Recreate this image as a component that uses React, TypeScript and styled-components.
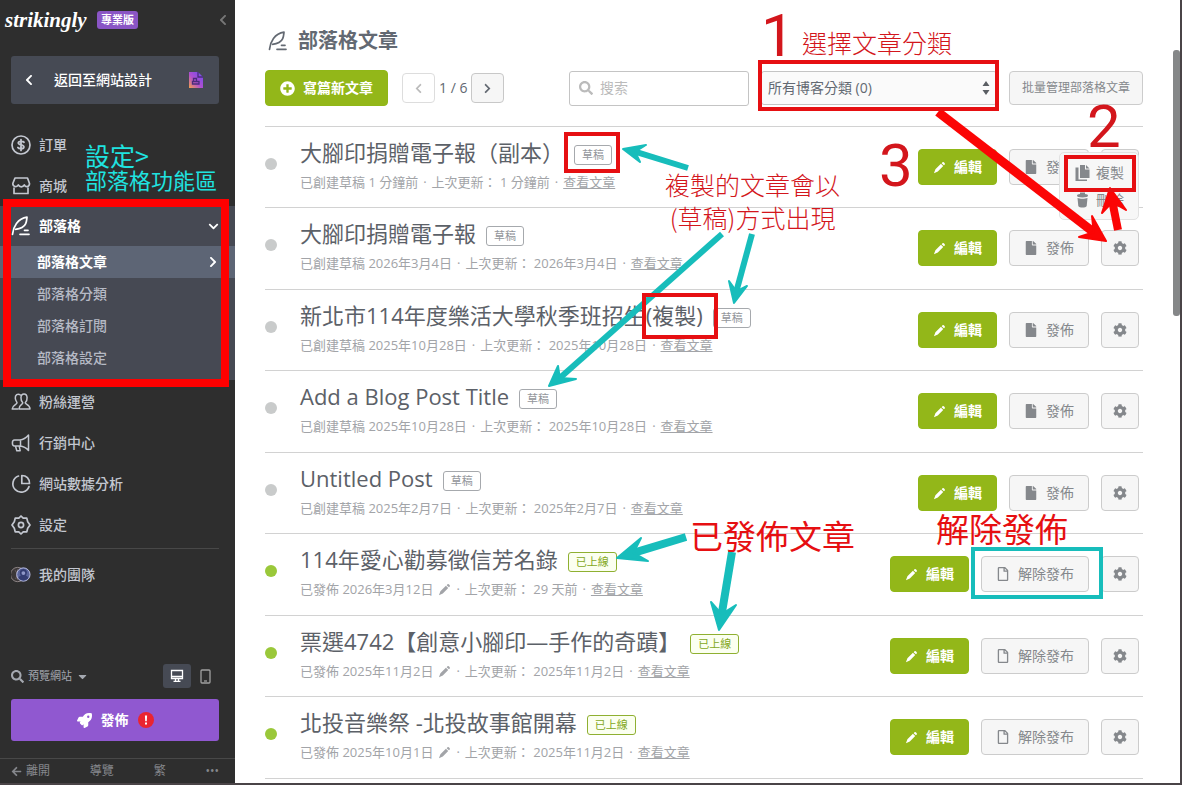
import React from "react";
import styled, { createGlobalStyle } from "styled-components";
import {
  FaArrowLeft,
  FaCaretDown,
  FaChevronDown,
  FaChevronLeft,
  FaChevronRight,
  FaCog,
  FaFile,
  FaPlusCircle,
  FaRegFile,
  FaRocket,
  FaSearch,
} from "react-icons/fa";

const RED = "#e60f12";
const TEAL = "#17bdbb";

const GlobalStyle = createGlobalStyle`
  *, *::before, *::after { box-sizing: border-box; }
  body {
    margin: 0;
    background: #4a4447;
    color: #636972;
    font: 14px/20px "Open Sans", "Noto Sans CJK TC", sans-serif;
  }
  button, input, select { font: inherit; color: inherit; }
  button { cursor: pointer; }
  a { color: inherit; }
  svg { display: block; flex: none; }
`;

const Page = styled.div`
  position: relative;
  display: flex;
  min-height: 100vh;
  padding: 0 2px 2px 0;
  overflow: hidden;
`;

/* ---------- sidebar ---------- */

const Sidebar = styled.aside`
  display: flex;
  flex-direction: column;
  flex: 0 0 235px;
  background: #2e2e2e;
  color: #c3c7d0;
`;

const Brand = styled.header`
  display: flex;
  align-items: center;
  height: 40px;
  padding: 0 6px 0 5px;
  color: #fff;
`;

const Logo = styled.span`
  width: 84px;
  margin-right: 8px;
  font: italic bold 21px/28px "Liberation Serif", serif;
`;

const Plan = styled.span`
  padding: 0 4px;
  border-radius: 3px;
  background: #8a55c5;
  font-size: 11px;
  line-height: 18px;
  font-weight: 700;
`;

const Collapse = styled.button`
  margin-left: auto;
  padding: 0;
  border: 0;
  background: none;
  color: #777;
`;

const BackButton = styled.button`
  display: flex;
  align-items: center;
  height: 48px;
  margin: 16px 16px 20px 11px;
  padding: 0 15px 0 12px;
  border: 0;
  border-radius: 3px;
  background: #464a54;
  color: #fff;
  font-weight: 500;

  span {
    flex: 1;
    padding-left: 19px;
    text-align: left;
  }
`;

const NavItem = styled.a<{ $active?: boolean }>`
  display: flex;
  align-items: center;
  gap: 8px;
  height: ${(p) => (p.$active ? 40 : 41)}px;
  padding: 0 16px 0 11px;
  color: ${(p) => (p.$active ? "#fff" : "#c3c7d0")};
  font-weight: ${(p) => (p.$active ? 700 : 500)};
  text-decoration: none;

  span {
    flex: 1;
  }
`;

const NavGroup = styled.div`
  margin-bottom: 1px;
  padding-bottom: 6px;
  background: #464953;
`;

const SubItem = styled.a<{ $active?: boolean }>`
  display: flex;
  align-items: center;
  justify-content: space-between;
  height: 32px;
  padding: 0 16px 0 37px;
  background: ${(p) => (p.$active ? "#5d6575" : "transparent")};
  color: ${(p) => (p.$active ? "#fff" : "#b6bac5")};
  font-weight: ${(p) => (p.$active ? 700 : 500)};
  text-decoration: none;
`;

const NavRule = styled.hr`
  width: auto;
  margin: 3px 16px 5px 11px;
  border: 0;
  border-top: 1px solid #484848;
`;

const Tools = styled.div`
  display: flex;
  align-items: center;
  margin: auto 0 11px;
  padding: 0 16px 0 11px;
  color: #a4a8b0;
  font-size: 11px;
`;

const ToolButton = styled.button<{ $active?: boolean }>`
  display: flex;
  align-items: center;
  justify-content: center;
  width: 28px;
  height: 24px;
  padding: 0;
  border: 0;
  border-radius: 3px;
  background: ${(p) => (p.$active ? "#464a54" : "none")};
  color: ${(p) => (p.$active ? "#fff" : "#a0a0a0")};
`;

const PreviewButton = styled.button`
  display: flex;
  align-items: center;
  gap: 4px;
  margin-right: auto;
  padding: 0;
  border: 0;
  background: none;
`;

const SiteButton = styled.button`
  display: flex;
  align-items: center;
  justify-content: center;
  gap: 9px;
  height: 42px;
  margin: 0 16px 17px 11px;
  border: 0;
  border-radius: 3px;
  background: #9058d0;
  color: #fff;
  font-weight: 700;
`;

const SidebarFooter = styled.footer`
  display: flex;
  align-items: center;
  justify-content: space-between;
  height: 25px;
  padding: 0 16px 0 11px;
  border-top: 1px solid #484848;
  color: #85878c;
  font-size: 12px;

  a {
    display: flex;
    align-items: center;
    gap: 4px;
    text-decoration: none;
  }
`;

/* ---------- main column ---------- */

const Main = styled.main`
  flex: 1;
  min-width: 0;
  padding: 25px 30px 4px;
  background: #fff;
`;

const ScrollTrack = styled.div`
  flex: 0 0 7px;
  padding-top: 50px;
  background: #fff;
`;

const ScrollThumb = styled.div`
  height: 266px;
  border-radius: 3px;
  background: #858788;
`;

const Heading = styled.h1`
  display: flex;
  align-items: center;
  gap: 10px;
  margin: 0 0 13px;
  padding-left: 3px;
  font-size: 20px;
  line-height: 32px;
  font-weight: 700;
`;

const Toolbar = styled.div`
  display: flex;
  align-items: center;
  height: 36px;
  margin-bottom: 20px;
`;

const Button = styled.button<{ $green?: boolean; $small?: boolean }>`
  display: flex;
  align-items: center;
  justify-content: center;
  gap: 8px;
  height: ${(p) => (p.$small ? 34 : 36)}px;
  padding: 0 ${(p) => (p.$small ? 12 : 14)}px;
  border: 1px solid ${(p) => (p.$green ? "#90b718" : "#ccc")};
  border-radius: 4px;
  background: ${(p) => (p.$green ? "#93b719" : "#f6f6f6")};
  color: ${(p) => (p.$green ? "#fff" : "#85888c")};
  font-size: ${(p) => (p.$small ? 12 : 14)}px;
  font-weight: ${(p) => (p.$green ? 700 : 400)};
  white-space: nowrap;
`;

const GearButton = styled(Button)`
  width: 38px;
  padding: 0;
`;

const Pager = styled.div`
  display: flex;
  align-items: center;
  gap: 4px;
  margin: 0 auto 0 14px;
  white-space: nowrap;
`;

const PageButton = styled.button`
  display: flex;
  align-items: center;
  justify-content: center;
  width: 33px;
  height: 30px;
  padding: 0;
  border: 1px solid #c8c8c8;
  border-radius: 4px;
  background: #f6f6f6;

  &:disabled {
    border-color: #ddd;
    background: #fff;
    color: #bbb;
  }
`;

const SearchBox = styled.label`
  display: flex;
  align-items: center;
  gap: 7px;
  width: 180px;
  height: 35px;
  margin-right: 12px;
  padding: 0 9px;
  border: 1px solid #c4c4c4;
  border-radius: 3px;
  color: #bbb;

  input {
    width: 100%;
    min-width: 0;
    padding: 0;
    border: 0;
    outline: 0;
    background: none;
  }
  input::placeholder {
    color: #bbb;
  }
`;

const SelectBox = styled.label`
  display: flex;
  align-items: center;
  width: 236px;
  height: 34px;
  margin-right: 12px;
  padding: 0 6px;
  border: 1px solid #c4c4c4;
  border-radius: 3px;
  background: #fafafa;

  select {
    flex: 1;
    padding: 0;
    border: 0;
    outline: 0;
    appearance: none;
    background: none;
  }
`;

const PostList = styled.ul`
  display: grid;
  grid-auto-rows: 81px 82px;
  margin: 0;
  padding: 0;
  border-bottom: 1px solid #d2d2d2;
  list-style: none;
`;

const PostRow = styled.li`
  position: relative;
  display: flex;
  align-items: start;
  padding: 22px 4px 0 0;
  border-top: 1px solid #d2d2d2;
`;

const Dot = styled.span<{ $live: boolean }>`
  flex: none;
  width: 12px;
  height: 12px;
  margin: 9px 23px 0 0;
  border-radius: 50%;
  background: ${(p) => (p.$live ? "#9ac83a" : "#c9cbcb")};
`;

const PostText = styled.div`
  flex: 1;
  min-width: 0;
  margin-top: -10px;
  white-space: nowrap;
`;

const TitleLine = styled.div`
  display: flex;
  align-items: center;
  gap: 10px;
  height: 26px;
`;

const PostTitle = styled.h2`
  margin: 0;
  color: #5c6168;
  font-size: 22px;
  line-height: 26px;
  font-weight: 400;
`;

const Badge = styled.span<{ $live: boolean }>`
  height: 20px;
  margin-top: 5px;
  padding: 0 7px;
  border: 1px solid ${(p) => (p.$live ? "#8fb031" : "#a6a9ad")};
  border-radius: 3px;
  background: ${(p) => (p.$live ? "#fbfff0" : "#fff")};
  color: ${(p) => (p.$live ? "#84a81c" : "#92959a")};
  font-size: 11px;
  line-height: 17px;
`;

const Meta = styled.p`
  display: flex;
  align-items: center;
  gap: 5px;
  margin: 7px 0 0;
  color: #a2a4a8;
  font-size: 13px;
  line-height: 20px;
`;

const Actions = styled.div`
  display: flex;
  gap: 12px;
`;

const Menu = styled.div`
  position: absolute;
  top: 25px;
  right: 4px;
  z-index: 1;
  display: flex;
  flex-direction: column;
  width: 80px;
  height: 68px;
  padding: 6px 0;
  border: 1px solid #e2e2e2;
  border-radius: 5px;
  background: #f7f7f7;

  button {
    display: flex;
    align-items: center;
    gap: 6px;
    height: 28px;
    padding: 0 0 0 15px;
    border: 0;
    background: none;
    color: #85888c;
    font-size: 14px;
  }
`;

/* ---------- hand-placed notes over the page ---------- */

const Overlay = styled.div`
  position: absolute;
  top: 0;
  left: 0;
  z-index: 2;
  width: 1182px;
  height: 785px;
  pointer-events: none;
`;

const Note = styled.div<{ $x: number; $y: number; $size: number; $line?: number; $color?: string; $weight?: number }>`
  position: absolute;
  left: ${(p) => p.$x}px;
  top: ${(p) => p.$y}px;
  color: ${(p) => p.$color || "#d3161c"};
  font-family: "Noto Sans CJK TC", sans-serif;
  font-size: ${(p) => p.$size}px;
  font-weight: ${(p) => p.$weight || 300};
  line-height: ${(p) => p.$line || p.$size}px;
  text-align: center;
  white-space: nowrap;
`;

const Digit = styled(Note)`
  font-family: Roboto, sans-serif;
`;

const Frame = styled.div<{ $x: number; $y: number; $w: number; $h: number; $b?: number; $color?: string }>`
  position: absolute;
  left: ${(p) => p.$x}px;
  top: ${(p) => p.$y}px;
  width: ${(p) => p.$w}px;
  height: ${(p) => p.$h}px;
  border: ${(p) => p.$b || 4}px solid ${(p) => p.$color || RED};
`;

/* ---------- icons ---------- */

type IconProps = { size?: number };

const Line = ({ size = 20, children }: IconProps & { children: React.ReactNode }) => (
  <svg width={size} height={size} viewBox="0 0 20 20" fill="none" stroke="currentColor" strokeWidth="1.7" strokeLinejoin="round" strokeLinecap="round" aria-hidden="true">
    {children}
  </svg>
);

const DollarIcon = () => (
  <Line>
    <circle cx="10" cy="10" r="9" />
    <path d="M13 7.2C12.4 6.1 7.3 5.7 7.3 8.1c0 2.3 5.6 1.4 5.6 3.8 0 2.3-5.2 2.1-6 .6M10 4.6v10.8" strokeWidth="1.8" />
  </Line>
);
const ShopIcon = () => (
  <Line>
    <path d="M4 2h12.500l2 5.500c0 3.600-4 4-5.200 1.400-1.300 2.600-4.700 2.600-6 0C6 11.500 1.800 11 1.800 7.500zM3 12v5.500h14V12" />
  </Line>
);
const QuillIcon = ({ size = 20 }: IconProps) => (
  <Line size={size}>
    <path d="M1.500 18.300C2.200 11 6.500 2.500 16 1.200c-.3 2.300-.3 4.300-1.300 6.500C13.200 11 9.500 13 4.500 13.300" />
    <path d="M9 18.300h9M13.500 14.300H17" />
  </Line>
);
const PeopleIcon = () => (
  <Line>
    <path d="M9.500 3C6.600 1 4 3 4.300 6.300c.1 2 1 3.200 1.700 4.200.5 2-4.500 2.400-4.800 6.500h5.500M8 17c.2-4.400 4-4.500 3.800-6.300C9.300 8.500 9 2 13 2s3.800 6.500 1.200 8.700C14 12.500 19 12.500 19 17z" strokeWidth="1.500" />
  </Line>
);
const HornIcon = () => (
  <Line>
    <path d="M17.500 2v15.500C14.500 14 12.500 13.300 9 13H3.500C.7 13 .7 7 3.500 7H9c3.500-.3 5.500-1.500 8.500-5zM9.500 7v6M4.500 13.200l1.300 4.600h3.400l-1-4.600" strokeWidth="1.500" />
  </Line>
);
const PieIcon = () => (
  <Line>
    <path d="M7.500 2A8.300 8.300 0 1 0 18 12.600" />
    <path d="M10.800 1.500v8h7.700c0-4.800-3-8-7.700-8z" />
  </Line>
);
const GearLineIcon = () => (
  <Line>
    <path d="M7.800 3.200 10 1l2.200 2.200h3.600l.9 3.500L19 10l-2.300 3.300-.9 3.500h-3.600L10 19l-2.200-2.200H4.200l-.9-3.500L1 10l2.300-3.300.9-3.500z" />
    <circle cx="10" cy="10" r="2.600" />
  </Line>
);
const TeamIcon = () => (
  <svg width="20" height="18" viewBox="1 0 21 18" aria-hidden="true">
    <circle cx="8" cy="8.500" r="7.500" fill="#3b3738" stroke="#92898a" />
    <path d="M5 4c2 1 3 5 1 9M8 3v11" stroke="#77696a" fill="none" />
    <circle cx="14" cy="8.500" r="7" fill="#5a659c" stroke="#b8bce0" />
    <path d="M10.500 5c1-3 6-3 7 0 .5 2 0 3.500-1 4.500 2 .5 2.500 2 2.500 3-2.500 3-7.500 3-10 0 0-1 .5-2.500 2.500-3-1-1-1.500-2.500-1-4.500z" fill="#343d72" />
    <circle cx="14" cy="7" r="2" fill="#8f97c8" />
  </svg>
);
const SiteIcon = () => (
  <svg width="16" height="18" viewBox="0 0 16 18" aria-hidden="true">
    <defs>
      <linearGradient id="siteFill" x1="0" y1="1" x2="1" y2="0">
        <stop offset="0" stopColor="#f3a04b" />
        <stop offset="0.450" stopColor="#b04fd0" />
        <stop offset="1" stopColor="#6a4cf0" />
      </linearGradient>
    </defs>
    <path d="M1 1h9l5 5v11H1z" fill="url(#siteFill)" />
    <path d="M10 1v5h5M5.500 10V7.500h3V10M4.500 10.500h6.500V13H4.500z" fill="none" stroke="#4a2c7c" strokeWidth="1.300" />
  </svg>
);
const DesktopIcon = () => (
  <svg width="14" height="14" viewBox="0 0 14 14" fill="none" stroke="currentColor" strokeWidth="1.300" aria-hidden="true">
    <path d="M1.500 1.500h11v8h-11zM1.500 7.500h11M5.500 9.500v2.500M8.500 9.500v2.500M3.500 12.300h7" />
  </svg>
);
const PhoneIcon = () => (
  <svg width="11" height="15" viewBox="0 0 11 15" fill="none" stroke="currentColor" strokeWidth="1.300" aria-hidden="true">
    <rect x="1" y="1" width="9" height="13" rx="1" />
    <path d="M4 12h3" />
  </svg>
);
const AlertIcon = () => (
  <svg width="16" height="16" viewBox="0 0 16 16" aria-hidden="true">
    <circle cx="8" cy="8" r="8" fill="#ea2430" />
    <path d="M6.900 3.500h2.200L8.800 9.300H7.200zM7 10.500h2v2H7z" fill="#fff" />
  </svg>
);
const PencilIcon = ({ size = 13 }: IconProps) => (
  <svg width={size} height={size} viewBox="0 0 14 14" fill="currentColor" aria-hidden="true">
    <path d="M10.300 1.400c.9-.9 3.300 1.500 2.400 2.400l-.9.900-2.500-2.400zM8.500 3 11 5.500 5.200 11.400 1 13.200l1.600-4.300z" />
  </svg>
);
const CopyIcon = () => (
  <svg width="15" height="16" viewBox="0 0 15 16" fill="currentColor" aria-hidden="true">
    <path d="M5 0h5v4.500h4.500V13H5zM11 0l3.500 3.500H11zM.5 2.500h3v12H12V16H.5z" />
  </svg>
);
const TrashIcon = () => (
  <svg width="15" height="16" viewBox="0 0 15 16" fill="currentColor" aria-hidden="true">
    <path d="M5 .5h5V2c2 .2 3 .8 3 1.800S11 5.500 7.500 5.500 2 4.800 2 3.800 3 2.200 5 2zM2.500 6c2.500 1 7.500 1 10 0l-.8 8c-1 2-7.400 2-8.400 0z" />
  </svg>
);
const SortIcon = () => (
  <svg width="8" height="14" viewBox="0 0 8 14" fill="#5a5e63" aria-hidden="true">
    <path d="M4 0l3.500 5h-7zM4 14L.5 9h7z" />
  </svg>
);

type Pt = [number, number];

const Arrow = ({ from, tip, left, right, width, color = TEAL }: { from: Pt; tip: Pt; left: Pt; right: Pt; width: number; color?: string }) => {
  const notch: Pt = [tip[0] + ((left[0] + right[0]) / 2 - tip[0]) * 0.6, tip[1] + ((left[1] + right[1]) / 2 - tip[1]) * 0.6];
  return (
    <g fill={color} stroke={color}>
      <line x1={from[0]} y1={from[1]} x2={notch[0]} y2={notch[1]} strokeWidth={width} />
      <polygon points={[tip, left, notch, right].map((p) => p.join(",")).join(" ")} strokeWidth="2" strokeLinejoin="round" />
    </g>
  );
};

/* ---------- data ---------- */

type Post = { title: string; live: boolean; created: string; updated: string; menu?: boolean };

const posts: Post[] = [
  { title: "大腳印捐贈電子報（副本）", live: false, created: "已創建草稿 1 分鐘前", updated: "1 分鐘前", menu: true },
  { title: "大腳印捐贈電子報", live: false, created: "已創建草稿 2026年3月4日", updated: "2026年3月4日" },
  { title: "新北市114年度樂活大學秋季班招生(複製)", live: false, created: "已創建草稿 2025年10月28日", updated: "2025年10月28日" },
  { title: "Add a Blog Post Title", live: false, created: "已創建草稿 2025年10月28日", updated: "2025年10月28日" },
  { title: "Untitled Post", live: false, created: "已創建草稿 2025年2月7日", updated: "2025年2月7日" },
  { title: "114年愛心勸募徵信芳名錄", live: true, created: "已發佈 2026年3月12日", updated: "29 天前" },
  { title: "票選4742【創意小腳印—手作的奇蹟】", live: true, created: "已發佈 2025年11月2日", updated: "2025年11月2日" },
  { title: "北投音樂祭 -北投故事館開幕", live: true, created: "已發佈 2025年10月1日", updated: "2025年11月2日" },
];

const PostItem = ({ post }: { post: Post }) => (
  <PostRow>
    <Dot $live={post.live} />
    <PostText>
      <TitleLine>
        <PostTitle>{post.title}</PostTitle>
        <Badge $live={post.live}>{post.live ? "已上線" : "草稿"}</Badge>
      </TitleLine>
      <Meta>
        <span>{post.created}</span>
        {post.live && <PencilIcon />}
        <span>·</span>
        <span>上次更新： {post.updated}</span>
        <span>·</span>
        <a href="#post">查看文章</a>
      </Meta>
    </PostText>
    <Actions>
      <Button $green>
        <PencilIcon />
        編輯
      </Button>
      <Button>
        {post.live ? <FaRegFile size={14} /> : <FaFile size={14} />}
        {post.live ? "解除發布" : "發佈"}
      </Button>
      <GearButton aria-label="設定">
        <FaCog size={14} />
      </GearButton>
    </Actions>
    {post.menu && (
      <Menu>
        <button>
          <CopyIcon />
          複製
        </button>
        <button>
          <TrashIcon />
          刪除
        </button>
      </Menu>
    )}
  </PostRow>
);

export default function App() {
  return (
    <>
      <GlobalStyle />
      <Page>
        <Sidebar>
          <Brand>
            <Logo>strikingly</Logo>
            <Plan>專業版</Plan>
            <Collapse aria-label="收合">
              <FaChevronLeft size={12} />
            </Collapse>
          </Brand>
          <BackButton>
            <FaChevronLeft size={12} />
            <span>返回至網站設計</span>
            <SiteIcon />
          </BackButton>
          <nav>
            <NavItem href="#orders"><DollarIcon /><span>訂單</span></NavItem>
            <NavItem href="#shop"><ShopIcon /><span>商城</span></NavItem>
            <NavGroup>
              <NavItem href="#blog" $active>
                <QuillIcon />
                <span>部落格</span>
                <FaChevronDown size={11} />
              </NavItem>
              <SubItem href="#posts" $active>部落格文章<FaChevronRight size={12} /></SubItem>
              <SubItem href="#categories">部落格分類</SubItem>
              <SubItem href="#subscribers">部落格訂閱</SubItem>
              <SubItem href="#settings">部落格設定</SubItem>
            </NavGroup>
            <NavItem href="#fans"><PeopleIcon /><span>粉絲運營</span></NavItem>
            <NavItem href="#marketing"><HornIcon /><span>行銷中心</span></NavItem>
            <NavItem href="#analytics"><PieIcon /><span>網站數據分析</span></NavItem>
            <NavItem href="#config"><GearLineIcon /><span>設定</span></NavItem>
            <NavRule />
            <NavItem href="#team"><TeamIcon /><span>我的團隊</span></NavItem>
          </nav>
          <Tools>
            <PreviewButton>
              <FaSearch size={13} />
              預覽網站
              <FaCaretDown size={13} />
            </PreviewButton>
            <ToolButton $active aria-label="桌面"><DesktopIcon /></ToolButton>
            <ToolButton aria-label="手機"><PhoneIcon /></ToolButton>
          </Tools>
          <SiteButton>
            <FaRocket size={15} />
            發佈
            <AlertIcon />
          </SiteButton>
          <SidebarFooter>
            <a href="#exit"><FaArrowLeft size={11} />離開</a>
            <a href="#tour">導覽</a>
            <a href="#lang">繁</a>
            <a href="#more">•••</a>
          </SidebarFooter>
        </Sidebar>

        <Main>
          <Heading>
            <QuillIcon />
            部落格文章
          </Heading>
          <Toolbar>
            <Button $green>
              <FaPlusCircle size={15} />
              寫篇新文章
            </Button>
            <Pager>
              <PageButton disabled aria-label="上一頁"><FaChevronLeft size={11} /></PageButton>
              1 / 6
              <PageButton aria-label="下一頁"><FaChevronRight size={11} /></PageButton>
            </Pager>
            <SearchBox>
              <FaSearch size={14} />
              <input type="text" placeholder="搜索" aria-label="搜索" />
            </SearchBox>
            <SelectBox>
              <select aria-label="分類">
                <option>所有博客分類 (0)</option>
              </select>
              <SortIcon />
            </SelectBox>
            <Button $small>批量管理部落格文章</Button>
          </Toolbar>
          <PostList>
            {posts.map((post) => (
              <PostItem key={post.title} post={post} />
            ))}
          </PostList>
        </Main>
        <ScrollTrack>
          <ScrollThumb />
        </ScrollTrack>

        <Overlay>
          <Frame $x={3} $y={199} $w={226} $h={188} $b={8} $color="#fe0000" />
          <Frame $x={758} $y={60} $w={241} $h={51} />
          <Frame $x={564} $y={132} $w={56} $h={41} />
          <Frame $x={642} $y={293} $w={76} $h={46} />
          <Frame $x={1064} $y={155} $w={72} $h={37} />
          <Frame $x={971} $y={547} $w={132} $h={52} $color={TEAL} />
          <svg width="1182" height="785" viewBox="0 0 1182 785" aria-hidden="true">
            <Arrow from={[688, 168]} tip={[623, 149]} left={[646, 145]} right={[640, 162]} width={6} />
            <Arrow from={[722, 234]} tip={[549, 386]} left={[558, 366]} right={[576, 379]} width={6} />
            <Arrow from={[752, 234]} tip={[734, 303]} left={[729, 281]} right={[747, 286]} width={6} />
            <Arrow from={[686, 537]} tip={[617, 558]} left={[641, 538]} right={[648, 561]} width={8} />
            <Arrow from={[732, 552]} tip={[719, 630]} left={[711, 602]} right={[736, 605]} width={8} />
            <Arrow from={[938, 112]} tip={[1106, 241]} left={[1092, 216]} right={[1079, 237]} width={9} color="#fb0505" />
            <Arrow from={[1118, 230]} tip={[1110, 188]} left={[1102, 213]} right={[1126, 210]} width={8} color="#fb0505" />
          </svg>
          <Digit $x={761} $y={6} $size={60} $weight={400}>1</Digit>
          <Digit $x={1087} $y={97} $size={60} $weight={400}>2</Digit>
          <Digit $x={879} $y={136} $size={60} $weight={400}>3</Digit>
          <Note $x={802} $y={30} $size={25}>選擇文章分類</Note>
          <Note $x={665} $y={168} $size={25} $line={33}>
            複製的文章會以
            <br />
            (草稿)方式出現
          </Note>
          <Note $x={690} $y={519} $size={33} $weight={400} $color={RED}>已發佈文章</Note>
          <Note $x={936} $y={512} $size={33} $weight={400} $color={RED}>解除發佈</Note>
          <Note $x={85} $y={143} $size={25} $weight={400} $color="#1fe3e0">設定&gt;</Note>
          <Note $x={85} $y={168} $size={22} $weight={400} $color="#1fe3e0">部落格功能區</Note>
        </Overlay>
      </Page>
    </>
  );
}
